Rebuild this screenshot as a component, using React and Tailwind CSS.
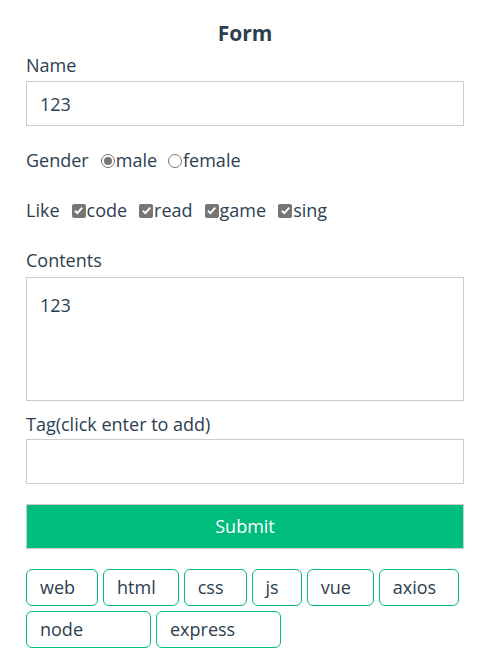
import React, { useState } from "react";

const likes = ["code", "read", "game", "sing"];
const tags = ["web", "html", "css", "js", "vue", "axios"];
const wideTags = ["node", "express"];

// gray native-looking radio
const Radio = ({ checked }) => (
  <span className="w-[14px] h-[14px] rounded-full border border-[#767676] flex items-center justify-center shrink-0">
    {checked && <span className="w-[8px] h-[8px] rounded-full bg-[#767676]" />}
  </span>
);

// gray checked checkbox
const Check = () => (
  <span className="w-[14px] h-[14px] rounded-[2px] bg-[#767676] flex items-center justify-center shrink-0">
    <svg width="11" height="11" viewBox="0 0 10 10">
      <path d="M1.8 5.2 L4 7.4 L8.4 2.4" fill="none" stroke="white" strokeWidth="1.8" />
    </svg>
  </span>
);

const App = () => {
  const [name, setName] = useState("123");
  const [contents, setContents] = useState("123");
  const [tag, setTag] = useState("");

  return (
    <div className="w-[486px] min-h-[669px] bg-white pl-[26px] pr-[22px] text-[18px] leading-[27px] text-[#2c3e50] font-['Open_Sans',sans-serif]">
      {/* Title */}
      <h1 className="pt-[21px] h-[46px] text-center text-[21px] leading-[25px] font-bold">Form</h1>

      {/* Name */}
      <div className="mt-[6px] h-[27px]">Name</div>
      <input
        value={name}
        onChange={(e) => setName(e.target.value)}
        className="mt-[2px] block w-full h-[45px] border border-[#ccc] px-[13px] outline-none"
      />

      {/* Gender */}
      <div className="mt-[21px] h-[27px] flex items-center">
        <span>Gender</span>
        <span className="ml-[12px] flex items-center">
          <Radio checked />
          <span className="ml-[1px]">male</span>
        </span>
        <span className="ml-[11px] flex items-center">
          <Radio />
          <span className="ml-[1px]">female</span>
        </span>
      </div>

      {/* Like */}
      <div className="mt-[23px] h-[27px] flex items-center">
        <span>Like</span>
        {likes.map((l) => (
          <span key={l} className="ml-[12px] flex items-center">
            <Check />
            <span className="ml-[1px]">{l}</span>
          </span>
        ))}
      </div>

      {/* Contents */}
      <div className="mt-[23px] h-[27px]">Contents</div>
      <textarea
        value={contents}
        onChange={(e) => setContents(e.target.value)}
        className="mt-[3px] block w-full h-[124px] border border-[#ccc] px-[13px] py-[14px] resize-none outline-none"
      />

      {/* Tag */}
      <div className="mt-[10px] h-[27px]">Tag(click enter to add)</div>
      <input
        value={tag}
        onChange={(e) => setTag(e.target.value)}
        className="mt-[1px] block w-full h-[45px] border border-[#ccc] px-[13px] outline-none"
      />

      <button className="mt-[20px] block w-full h-[45px] bg-[#00bd7e] border border-[#ccc] text-white">
        Submit
      </button>

      <div className="mt-[20px] flex flex-wrap gap-[5px]">
        {tags.map((t) => (
          <span
            key={t}
            className="h-[37px] flex items-center pl-[13px] pr-[22px] border border-[#00bd7e] rounded-[6px]"
          >
            {t}
          </span>
        ))}
        {wideTags.map((t) => (
          <span
            key={t}
            className="h-[37px] w-[125px] flex items-center pl-[13px] border border-[#00bd7e] rounded-[6px]"
          >
            {t}
          </span>
        ))}
      </div>
    </div>
  );
};

export default App;
